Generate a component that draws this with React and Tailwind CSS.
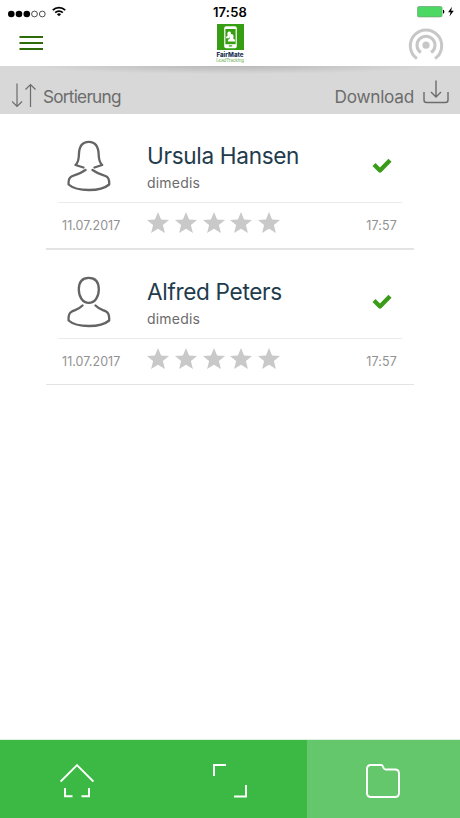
const LEADS = [
  { name: 'Ursula Hansen', firma: 'dimedis', datum: '11.07.2017', zeit: '17:57', weiblich: true },
  { name: 'Alfred Peters', firma: 'dimedis', datum: '11.07.2017', zeit: '17:57', weiblich: false },
];

function StatusBar() {
  return (
    <div className="flex h-6 items-center justify-between pl-2 pr-[5px]">
      <div className="flex w-[170px] items-center">
        <svg width="38" height="8" viewBox="0 0 38 8" className="mt-[3px]">
          <circle cx="3.3" cy="4" r="3.3" fill="#000" />
          <circle cx="11" cy="4" r="3.3" fill="#000" />
          <circle cx="18.8" cy="4" r="3.3" fill="#000" />
          <circle cx="26.5" cy="4" r="2.9" fill="none" stroke="#222" strokeWidth="0.8" />
          <circle cx="34.3" cy="4" r="2.9" fill="none" stroke="#222" strokeWidth="0.8" />
        </svg>
        <svg width="14" height="11" viewBox="0 0 14 11" className="ml-1.5 -mt-0.5" fill="none" stroke="#000" strokeWidth="1.8">
          <path d="M.8 4.1a8.9 8.9 0 0 1 12.4 0" />
          <path d="M3.2 6.6a5.4 5.4 0 0 1 7.6 0" />
          <path d="M7 10.3 4.9 8.2a3 3 0 0 1 4.2 0z" fill="#000" stroke="none" />
        </svg>
      </div>
      <span className="mr-[3px] text-[13px] leading-6 font-semibold tracking-[0.2px] text-black">17:58</span>
      <div className="flex w-[170px] items-center justify-end">
        <svg width="38" height="12" viewBox="0 0 38 12">
          <rect x=".5" y=".5" width="24.6" height="10.4" rx="1.5" fill="#4bd964" stroke="#6f9f78" strokeWidth=".7" />
          <path d="M26 3.8c1.8 0 1.8 3.8 0 3.8z" fill="#000" />
          <path d="M35 .8 31.1 6.2h2.5l-1.2 4.3 4.4-5.7h-2.6z" fill="#000" />
        </svg>
      </div>
    </div>
  );
}

function Logo() {
  return (
    <div className="flex w-7 flex-col items-center">
      <svg width="27" height="26" viewBox="0 0 27 26">
        <rect width="27" height="26" fill="#379e14" />
        <rect x="7.2" y="2.2" width="12.6" height="22" rx="2" fill="#fff" />
        <rect x="8.4" y="5" width="10.2" height="15.2" fill="#379e14" />
        <path d="M8.8 14.2c0-1.9 1-2.2 1.9-2.8-1-2.2 0-4 1.5-4 1.9 0 2.2 1.9 1.5 3.4l-1.7 3.4z" fill="#fff" />
        <path d="M10.7 17.6c0-2 1.4-2.6 2.3-3-1.1-2.7 0-4.7 1.6-4.7 2 0 2.4 2.3 1.6 4.5 1.2.6 2 1.1 2 3.2z" fill="#fff" />
        <rect x="11.7" y="21.3" width="3.6" height="1.2" rx=".6" fill="#379e14" />
      </svg>
      <span className="mt-px text-[6.2px] leading-[7px] font-extrabold text-[#1b3453]">FairMate</span>
      <span className="text-[4.5px] leading-[5px] tracking-[-0.1px] whitespace-nowrap text-[#62ae48]">LeadTracking</span>
    </div>
  );
}

function Header() {
  return (
    <header className="flex h-[42px] items-start justify-between pl-[19px] pr-4">
      <svg width="53" height="26" viewBox="0 0 53 26" stroke="#2d6b0b" strokeWidth="2">
        <path d="M.5 13H24M.5 19H24M.5 25H24" />
      </svg>
      <Logo />
      <div className="flex w-14 justify-end pt-1">
        <svg width="36" height="34" viewBox="0 0 36 34" fill="none" stroke="#c7c7c7" strokeWidth="3">
          <circle cx="18" cy="17.2" r="3.6" fill="#c7c7c7" stroke="none" />
          <path d="M12.9 24.6a9 9 0 1 1 10.2 0" />
          <path d="M8.9 30.6a15.7 15.7 0 1 1 18.2 0" />
        </svg>
      </div>
    </header>
  );
}

function Toolbar() {
  return (
    <div className="h-12 bg-[#d8d8d8]">
      <div className="flex h-full items-start justify-between bg-[radial-gradient(ellipse_200px_8px_at_50%_0%,#b8b8b8,#d8d8d8)] pl-3 pr-[11px] text-[#6c6c6c]">
        <div className="flex">
          <svg width="25" height="26" viewBox="0 0 25 26" className="mt-[17px]" fill="none" stroke="currentColor" strokeWidth="1.2">
            <path d="M5 .5v23M0 18.500l5 5 5-5M18.500 24V1.500M13.500 6.500l5-5 5 5" />
          </svg>
          <span className="ml-1.5 mt-[19px] text-[17.2px] leading-6 tracking-[-0.75px]">Sortierung</span>
        </div>
        <div className="flex">
          <span className="mt-[19px] text-[17.2px] leading-6 tracking-[-0.25px]">Download</span>
          <svg width="26" height="24" viewBox="0 0 26 24" className="ml-[9px] mt-[14px]" fill="none" stroke="currentColor" strokeWidth="1.4">
            <path d="M1 12v8q0 2.500 2.500 2.500h19q2.500 0 2.500-2.500v-8" />
            <path d="M13 .5v16.500M8 12l5 5 5-5" />
          </svg>
        </div>
      </div>
    </div>
  );
}

function Avatar({ weiblich }) {
  return (
    <svg width="44" height="52" viewBox="0 0 44 52" className="mt-[26px] shrink-0" fill="none" stroke="#646464" strokeWidth="2.3" strokeLinecap="round" strokeLinejoin="round">
      {weiblich ? (
        <>
          <path d="M16.500 27.500 8.500 25q3.200-3 3.400-10C12 6 15 1.800 21.800 1.800S31.500 6 31.700 15q.2 7 3.500 10l-7.800 2.500" />
          <path d="M18.500 30C12 34.500 8.500 34.500 4.500 36.500c-2.500 1.300-3.200 4-2.900 8C6 48.500 14 50 22 50s15.500-1.500 20.200-5.500c.2-4-.2-6.500-2.700-8C35.500 34.500 32 34.500 25.500 30" />
        </>
      ) : (
        <>
          <path d="M21.800 1.800c-6.500 0-10 4-10 11.700 0 7.500 4 13.300 10 13.300s10-5.800 10-13.300c0-7.700-3.500-11.700-10-11.700z" />
          <path d="M15.500 29.500C11 34 8.500 33.500 4.500 35.700c-2.500 1.300-3.200 4.500-2.900 8.800C6 48.500 14 50 22 50s15.500-1.500 20.200-5.500c.2-4.300-.2-7.300-2.700-8.800C35.500 33.500 33 34 28.500 29.500" />
        </>
      )}
    </svg>
  );
}

function Stars() {
  return (
    <div className="flex gap-[5.8px]">
      {[1, 2, 3, 4, 5].map((n) => (
        <svg key={n} width="22" height="22" viewBox="0 0 22 22" className="shrink-0" fill="#c9c9c9">
          <path d="M11 0l3.100 7.400 7.900.5-6.100 5.100 2 8L11 16.800 4.100 21l2-8L0 7.900l7.900-.5z" />
        </svg>
      ))}
    </div>
  );
}

function LeadCard({ lead }) {
  return (
    <li className="mx-[46px] flex h-[135px] flex-col border-b border-[#e3e3e3] first:h-[136px] first:border-b-2">
      <div className="mx-3 flex h-[89px] shrink-0 border-b border-[#ececec] pl-[9px]">
        <Avatar weiblich={lead.weiblich} />
        <div className="ml-9 flex-1 pt-[27px]">
          <p className="text-[22.6px] leading-[30px] tracking-[-0.33px] whitespace-nowrap text-[#223b4c]">{lead.name}</p>
          <p className="mt-0.5 text-[14px] leading-5 tracking-[0.2px] text-[#6b6b6b]">{lead.firma}</p>
        </div>
        <svg width="20" height="16" viewBox="0 0 20 16" className="mr-[10px] mt-[44px]" fill="none" stroke="#3a9c18" strokeWidth="4.3" strokeLinejoin="round">
          <path d="M2 6.500l6 6L18 2.200" />
        </svg>
      </div>
      <div className="flex items-start pl-4 pr-[17px] text-[12.5px] text-[#929292]">
        <span className="mt-[13px] w-[85px] leading-5 tracking-[0.05px]">{lead.datum}</span>
        <div className="mt-[9px] flex-1">
          <Stars />
        </div>
        <span className="mt-[13px] leading-5 tracking-[0.15px]">{lead.zeit}</span>
      </div>
    </li>
  );
}

function TabBar() {
  return (
    <nav className="grid h-[79px] grid-cols-3 border-t border-[#dff1e1] bg-[#3cb844]">
      <div className="flex justify-center pt-6">
        <svg width="34" height="34" viewBox="0 0 34 34" fill="none" stroke="#fff" strokeWidth="1.9">
          <path d="M.6 17.500 17 1.200l16.400 16.300M5 24v8.200h7.500M29 24v8.200h-7.500" />
        </svg>
      </div>
      <div className="flex justify-center pt-6">
        <svg width="34" height="34" viewBox="0 0 34 34" fill="none" stroke="#fff" strokeWidth="1.9">
          <path d="M1 12V1h12M33 21v11.500H21" />
        </svg>
      </div>
      <div className="flex justify-center bg-[#64c76c] pt-6">
        <svg width="34" height="34" viewBox="0 0 34 34" fill="none" stroke="#fff" strokeWidth="1.9">
          <path d="M5 1h10q1.500 0 2 1.500l.6 1.500q.5 1.500 2.200 1.500H29q4 0 4 4V29q0 4-4 4H5q-4 0-4-4V5q0-4 4-4z" />
        </svg>
      </div>
    </nav>
  );
}

export default function App() {
  return (
    <div className="flex h-[818px] w-[460px] flex-col bg-white font-[Inter,'Liberation_Sans',sans-serif]">
      <StatusBar />
      <Header />
      <Toolbar />
      <ul className="flex-1">
        {LEADS.map((lead) => (
          <LeadCard key={lead.name} lead={lead} />
        ))}
      </ul>
      <TabBar />
    </div>
  );
}
